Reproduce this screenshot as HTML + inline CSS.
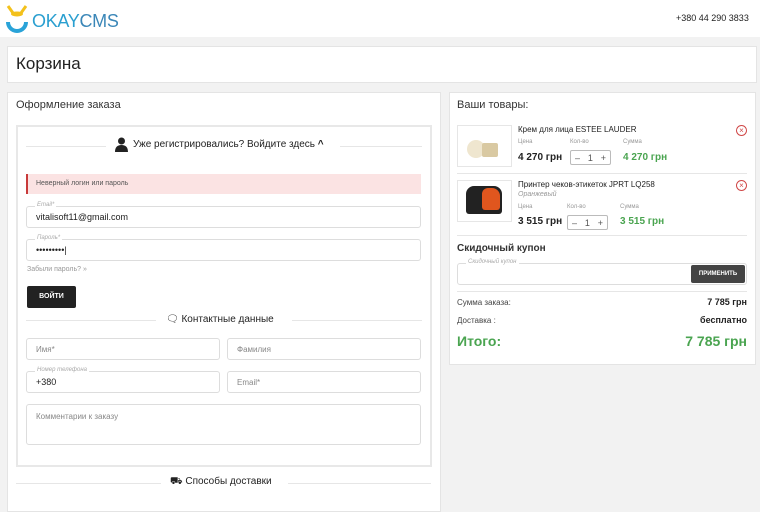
<!DOCTYPE html>
<html><head><meta charset="utf-8"><style>
*{box-sizing:border-box;margin:0;padding:0}
body{width:760px;height:499px;overflow:hidden;background:#f2f2f2;font-family:"Liberation Sans",sans-serif;color:#222;position:relative}
.a{position:absolute}
.box{position:absolute;background:#fff;border:1px solid #e4e4e4}
.inp{position:absolute;background:#fff;border:1px solid #ddd;border-radius:3px;font-size:8px;color:#888;padding-left:9px;display:flex;align-items:center}
.lbl{position:absolute;top:-5px;left:8px;background:#fff;font-size:6px;color:#aaa;font-style:italic;padding:0 2px}
.line{position:absolute;height:1px;background:#e6e6e6}
.g{color:#4aa450}
.sm{font-size:6px;color:#999}
.qty{position:absolute;width:41px;height:15px;border:1px solid #bbb;border-radius:2px;font-size:9px;color:#555;display:flex;justify-content:space-around;align-items:center}
.x{position:absolute;width:11px;height:11px;border:1px solid #d04848;border-radius:50%;color:#d04848;font-size:8px;line-height:9px;text-align:center}
</style></head><body>
<div class="a" style="left:0;top:0;width:760px;height:37px;background:#fff"></div>
<svg class="a" style="left:6px;top:5px" width="22" height="28" viewBox="0 0 22 28"><path d="M2 1 L7 8 M20 1 L15 8" stroke="#f3c11b" stroke-width="3"/><ellipse cx="11" cy="9" rx="6" ry="2.5" fill="#f3c11b"/><path d="M2 17 A9 9 0 0 0 20 17" stroke="#2aa3d8" stroke-width="4" fill="none"/></svg>
<div class="a" style="left:32px;top:11px;font-size:18px;color:#2a9fd0;letter-spacing:-0.3px">OKAY<span style="color:#3b87b8">CMS</span></div>
<div class="a" style="left:676px;top:13px;font-size:9px;color:#222">+380 44 290 3833</div>

<div class="box" style="left:7px;top:46px;width:750px;height:37px"></div>
<div class="a" style="left:16px;top:54px;font-size:17px;color:#222">Корзина</div>

<div class="box" style="left:7px;top:92px;width:434px;height:420px"></div>
<div class="a" style="left:16px;top:99px;font-size:11px;color:#333">Оформление заказа</div>
<div class="box" style="left:16px;top:125px;width:416px;height:342px;border:2px solid #e8e8e8"></div>
<div class="line" style="left:26px;top:146px;width:80px"></div>
<div class="line" style="left:340px;top:146px;width:82px"></div>
<svg class="a" style="left:115px;top:137px" width="13" height="15" viewBox="0 0 13 15"><circle cx="6.5" cy="4" r="3.5" fill="#222"/><path d="M0 15 Q0 8 6.5 8 Q13 8 13 15Z" fill="#222"/></svg>
<div class="a" style="left:133px;top:139px;font-size:10px;color:#222">Уже регистрировались? Войдите здесь <b>^</b></div>
<div class="a" style="left:26px;top:174px;width:395px;height:20px;background:#fbe3e3;border-left:2px solid #c83a3a;font-size:7px;color:#555;padding:6px 8px">Неверный логин или пароль</div>
<div class="inp" style="left:26px;top:206px;width:395px;height:22px;color:#222;font-size:9px">vitalisoft11@gmail.com<span class="lbl">Email*</span></div>
<div class="inp" style="left:26px;top:239px;width:395px;height:22px;color:#222;font-size:9px">•••••••••|<span class="lbl">Пароль*</span></div>
<div class="a" style="left:27px;top:266px;font-size:7px;color:#999">Забыли пароль? »</div>
<div class="a" style="left:27px;top:286px;width:49px;height:22px;background:#222;border-radius:2px;color:#fff;font-size:7px;font-weight:bold;text-align:center;line-height:22px">ВОЙТИ</div>
<div class="line" style="left:26px;top:320px;width:130px"></div>
<div class="line" style="left:292px;top:320px;width:130px"></div>
<div class="a" style="left:166px;top:314px;font-size:10px;color:#222">🗨 Контактные данные</div>
<div class="inp" style="left:26px;top:338px;width:194px;height:22px">Имя*</div>
<div class="inp" style="left:227px;top:338px;width:194px;height:22px">Фамилия</div>
<div class="inp" style="left:26px;top:371px;width:194px;height:22px;color:#222;font-size:9px">+380<span class="lbl">Номер телефона</span></div>
<div class="inp" style="left:227px;top:371px;width:194px;height:22px">Email*</div>
<div class="inp" style="left:26px;top:404px;width:395px;height:41px;align-items:flex-start;padding-top:7px">Комментарии к заказу</div>
<div class="line" style="left:16px;top:483px;width:145px"></div>
<div class="line" style="left:288px;top:483px;width:143px"></div>
<div class="a" style="left:170px;top:476px;font-size:10px;color:#222">⛟ Способы доставки</div>

<div class="box" style="left:449px;top:92px;width:307px;height:273px"></div>
<div class="a" style="left:457px;top:99px;font-size:11px;color:#333">Ваши товары:</div>
<div class="box" style="left:457px;top:125px;width:55px;height:42px;border-color:#e6e6e6"></div>
<div class="a" style="left:467px;top:140px;width:18px;height:18px;border-radius:50%;background:#efe6cf"></div>
<div class="a" style="left:482px;top:143px;width:16px;height:14px;background:#d9c9a2;border-radius:2px"></div>
<div class="a" style="left:518px;top:125px;font-size:8px">Крем для лица ESTEE LAUDER</div>
<div class="a sm" style="left:518px;top:139px">Цена</div><div class="a sm" style="left:570px;top:139px">Кол-во</div><div class="a sm" style="left:623px;top:139px">Сумма</div>
<div class="a" style="left:518px;top:152px;font-size:10px;font-weight:bold">4 270 грн</div>
<div class="qty" style="left:570px;top:150px">–<span>1</span>+</div>
<div class="a g" style="left:623px;top:152px;font-size:10px;font-weight:bold">4 270 грн</div>
<div class="x" style="left:736px;top:125px">×</div>
<div class="line" style="left:457px;top:173px;width:290px"></div>
<div class="box" style="left:457px;top:180px;width:55px;height:42px;border-color:#e6e6e6"></div>
<div class="a" style="left:466px;top:186px;width:36px;height:28px;background:#222;border-radius:8px 8px 3px 3px"></div>
<div class="a" style="left:482px;top:188px;width:18px;height:22px;background:#e0561e;border-radius:6px 8px 3px 3px"></div>
<div class="a" style="left:518px;top:180px;font-size:8px">Принтер чеков-этикеток JPRT LQ258</div>
<div class="a" style="left:518px;top:191px;font-size:7px;color:#999;font-style:italic">Оранжевый</div>
<div class="a sm" style="left:518px;top:204px">Цена</div><div class="a sm" style="left:567px;top:204px">Кол-во</div><div class="a sm" style="left:620px;top:204px">Сумма</div>
<div class="a" style="left:518px;top:216px;font-size:10px;font-weight:bold">3 515 грн</div>
<div class="qty" style="left:567px;top:215px">–<span>1</span>+</div>
<div class="a g" style="left:620px;top:216px;font-size:10px;font-weight:bold">3 515 грн</div>
<div class="x" style="left:736px;top:180px">×</div>
<div class="line" style="left:457px;top:235px;width:290px"></div>
<div class="a" style="left:457px;top:243px;font-size:10px;font-weight:bold;color:#333">Скидочный купон</div>
<div class="inp" style="left:457px;top:263px;width:290px;height:22px"><span class="lbl">Скидочный купон</span></div>
<div class="a" style="left:691px;top:265px;width:54px;height:18px;background:#444;border-radius:2px;color:#fff;font-size:6px;font-weight:bold;text-align:center;line-height:18px">ПРИМЕНИТЬ</div>
<div class="line" style="left:457px;top:291px;width:290px"></div>
<div class="a" style="left:457px;top:298px;font-size:8px;color:#444">Сумма заказа:</div>
<div class="a" style="right:13px;top:297px;font-size:9px;font-weight:bold">7 785 грн</div>
<div class="a" style="left:457px;top:316px;font-size:8px;color:#444">Доставка :</div>
<div class="a" style="right:13px;top:315px;font-size:9px;font-weight:bold">бесплатно</div>
<div class="a g" style="left:457px;top:333px;font-size:14px;font-weight:bold">Итого:</div>
<div class="a g" style="right:13px;top:333px;font-size:14px;font-weight:bold">7 785 грн</div>
</body></html>
